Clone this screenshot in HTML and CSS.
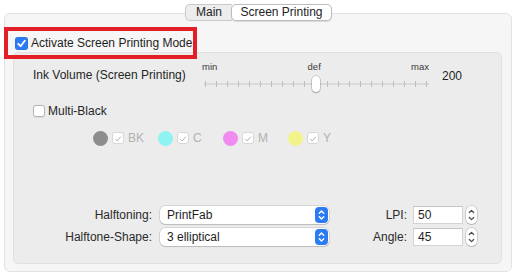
FILE: index.html
```html
<!DOCTYPE html>
<html>
<head>
<meta charset="utf-8">
<link rel="stylesheet" href="styles.css">
</head>
<body>
<div class="tabbar">
  <div class="tab">Main</div>
  <div class="tab active">Screen Printing</div>
</div>
<div class="outer">
  <div class="highlight"></div>
  <div class="check-row main-check">
    <span class="cb checked"><svg viewBox="0 0 13 13" width="13" height="13"><path d="M3.2 6.8 L5.6 9.2 L9.8 3.8" fill="none" stroke="#fff" stroke-width="1.8" stroke-linecap="round" stroke-linejoin="round"/></svg></span>
    <span>Activate Screen Printing Mode</span>
  </div>
  <div class="inner">
    <div class="ink-row">
      <div class="ink-label">Ink Volume (Screen Printing)</div>
      <div class="slider">
        <div class="slider-labels"><span>min</span><span>def</span><span>max</span></div>
        <div class="track">
          <div class="line"></div>
          <div class="ticks">
            <i></i><i></i><i></i><i></i><i></i><i></i><i></i><i></i><i></i><i></i><i></i><i></i><i></i><i></i><i></i><i></i><i></i><i></i><i></i><i></i><i></i>
          </div>
          <div class="thumb"></div>
        </div>
      </div>
      <div class="value">200</div>
    </div>
    <div class="check-row multi">
      <span class="cb small"></span>
      <span>Multi-Black</span>
    </div>
    <div class="colors">
      <div class="ink"><span class="dot bk"></span><span class="cb dis"><svg viewBox="0 0 12 12" width="12" height="12"><path d="M3 6.2 L5 8.4 L9 3.6" fill="none" stroke="#b4b4b4" stroke-width="1.2" stroke-linecap="round" stroke-linejoin="round"/></svg></span><span class="ink-name">BK</span></div>
      <div class="ink"><span class="dot c"></span><span class="cb dis"><svg viewBox="0 0 12 12" width="12" height="12"><path d="M3 6.2 L5 8.4 L9 3.6" fill="none" stroke="#b4b4b4" stroke-width="1.2" stroke-linecap="round" stroke-linejoin="round"/></svg></span><span class="ink-name">C</span></div>
      <div class="ink"><span class="dot m"></span><span class="cb dis"><svg viewBox="0 0 12 12" width="12" height="12"><path d="M3 6.2 L5 8.4 L9 3.6" fill="none" stroke="#b4b4b4" stroke-width="1.2" stroke-linecap="round" stroke-linejoin="round"/></svg></span><span class="ink-name">M</span></div>
      <div class="ink"><span class="dot y"></span><span class="cb dis"><svg viewBox="0 0 12 12" width="12" height="12"><path d="M3 6.2 L5 8.4 L9 3.6" fill="none" stroke="#b4b4b4" stroke-width="1.2" stroke-linecap="round" stroke-linejoin="round"/></svg></span><span class="ink-name">Y</span></div>
    </div>
    <div class="settings">
      <div class="lbl">Halftoning:</div>
      <div class="popup"><span>PrintFab</span><span class="popbtn"><svg viewBox="0 0 13 16" width="13" height="16"><path d="M4.3 6.3 L6.5 4.1 L8.7 6.3 M4.3 9.7 L6.5 11.9 L8.7 9.7" fill="none" stroke="#fff" stroke-width="1.4" stroke-linecap="round" stroke-linejoin="round"/></svg></span></div>
      <div class="lbl lbl2">LPI:</div>
      <div class="field">50</div>
      <div class="stepper"><svg viewBox="0 0 11 18" width="11" height="18"><path d="M3.3 6.5 L5.5 4.3 L7.7 6.5 M3.3 11.5 L5.5 13.7 L7.7 11.5" fill="none" stroke="#4a4a4a" stroke-width="1.2" stroke-linecap="round" stroke-linejoin="round"/></svg></div>

      <div class="lbl">Halftone-Shape:</div>
      <div class="popup"><span>3 elliptical</span><span class="popbtn"><svg viewBox="0 0 13 16" width="13" height="16"><path d="M4.3 6.3 L6.5 4.1 L8.7 6.3 M4.3 9.7 L6.5 11.9 L8.7 9.7" fill="none" stroke="#fff" stroke-width="1.4" stroke-linecap="round" stroke-linejoin="round"/></svg></span></div>
      <div class="lbl lbl2">Angle:</div>
      <div class="field">45</div>
      <div class="stepper"><svg viewBox="0 0 11 18" width="11" height="18"><path d="M3.3 6.5 L5.5 4.3 L7.7 6.5 M3.3 11.5 L5.5 13.7 L7.7 11.5" fill="none" stroke="#4a4a4a" stroke-width="1.2" stroke-linecap="round" stroke-linejoin="round"/></svg></div>
    </div>
  </div>
</div>
</body>
</html>
```

FILE: styles.css
```css
* { box-sizing: border-box; }
html, body {
  margin: 0;
  padding: 0;
  background: #ffffff;
  font-family: "Liberation Sans", Arial, sans-serif;
  font-size: 12px;
  color: #262626;
}
.tabbar {
  position: relative;
  z-index: 2;
  display: flex;
  justify-content: center;
  margin: 4px 0 0 -1px;
  height: 17px;
}
.tab {
  height: 17px;
  line-height: 15px;
  padding: 0 10px;
  background: #ededed;
  border: 1px solid #c9c9c9;
  border-radius: 5px 0 0 5px;
  font-size: 12px;
  color: #222;
}
.tab:first-child { width: 47px; padding: 0; text-align: center; border-right: none; }
.tab.active {
  width: 101px;
  padding: 0;
  text-align: center;
  background: #ffffff;
  border-radius: 5px;
  border-color: #bdbdbd;
  margin-left: -1px;
  box-shadow: 0 0.5px 1px rgba(0,0,0,0.12);
}
.outer {
  position: relative;
  margin: -8px 0 0 4px;
  width: 508px;
  height: 259px;
  background: #f6f6f6;
  border: 1px solid #e2e2e2;
  border-radius: 6px;
  padding: 21px 9px 7px 8px;
}
.highlight {
  position: absolute;
  left: -1px;
  top: 13px;
  width: 193px;
  height: 32px;
  border: 4px solid #e31e26;
  z-index: 3;
}
.check-row {
  display: flex;
  align-items: center;
}
.main-check {
  height: 16px;
  margin-bottom: 1px;
  padding-left: 2px;
  font-size: 12px;
  color: #1e1e1e;
}
.cb {
  display: inline-flex;
  flex: none;
  width: 13px;
  height: 13px;
  border-radius: 3px;
  background: #fff;
  border: 1px solid #b9b9b9;
  margin-right: 3px;
}
.cb svg { display: block; }
.cb.checked {
  background: #2b7cf3;
  border: none;
  box-shadow: inset 0 0 0 0.5px rgba(0,0,0,0.12);
}
.inner {
  display: flex;
  flex-direction: column;
  width: 489px;
  height: 212px;
  background: #ececec;
  border: 1px solid #e1e1e1;
  border-radius: 5px;
  padding: 8px 0 17px 0;
}
.ink-row {
  display: flex;
  align-items: center;
  height: 31px;
  padding-left: 19px;
}
.ink-label {
  width: 169px;
  margin-bottom: 3px;
  font-size: 12px;
}
.slider {
  width: 228px;
  height: 31px;
}
.slider-labels {
  display: flex;
  justify-content: space-between;
  height: 12px;
  line-height: 12px;
  font-size: 9.5px;
  color: #3a3a3a;
  padding-right: 1px;
}
.track {
  position: relative;
  height: 19px;
  margin-top: 0;
}
.line {
  position: absolute;
  left: 2px;
  right: 1px;
  top: 10px;
  height: 2px;
  background: #d9d9d9;
}
.ticks {
  position: absolute;
  left: 3px;
  top: 8px;
  width: 222px;
  height: 6px;
  display: flex;
  justify-content: space-between;
}
.ticks i {
  display: block;
  width: 1px;
  height: 6px;
  background: #bdbdbd;
}
.thumb {
  position: absolute;
  left: 110px;
  top: 3px;
  width: 8px;
  height: 16px;
  background: #fff;
  border-radius: 4px;
  box-shadow: 0 0 0 0.5px rgba(0,0,0,0.25), 0 1px 1.5px rgba(0,0,0,0.25);
}
.value {
  margin-left: 12px;
  margin-bottom: 1px;
  font-size: 12px;
  color: #1e1e1e;
}
.multi {
  margin-top: 12px;
  height: 14px;
  padding-left: 19px;
}
.cb.small {
  width: 12px;
  height: 12px;
  border-color: #b5b5b5;
  box-shadow: 0 0.5px 1px rgba(0,0,0,0.08);
}
.colors {
  display: flex;
  margin-top: 12px;
  height: 16px;
  padding-left: 79px;
}
.ink {
  display: flex;
  align-items: center;
  width: 65px;
}
.dot {
  width: 15px;
  height: 15px;
  border-radius: 50%;
  margin-right: 4px;
}
.dot.bk { background: #8d8d8d; }
.dot.c { background: #8ef3f3; }
.dot.m { background: #f08bef; }
.dot.y { background: #f3f38c; }
.cb.dis {
  width: 12px;
  height: 12px;
  border-color: #d6d6d6;
  margin-right: 4px;
}
.ink-name {
  color: #b1b1b1;
  font-size: 12px;
}
.settings {
  margin-top: auto;
  display: grid;
  grid-template-columns: 146px 169px 84px 53px 13px;
  grid-auto-rows: 18px;
  row-gap: 4px;
  align-items: center;
}
.lbl {
  text-align: right;
  padding-right: 8px;
  font-size: 12px;
  color: #2a2a2a;
}
.lbl.lbl2 { padding-right: 6px; }
.popup {
  display: flex;
  align-items: center;
  justify-content: space-between;
  height: 18px;
  background: #fff;
  border-radius: 5px;
  padding: 0 1px 0 7px;
  box-shadow: 0 0 0 0.5px rgba(0,0,0,0.2), 0 1px 1px rgba(0,0,0,0.12);
  font-size: 12px;
  color: #1e1e1e;
}
.popbtn {
  display: block;
  width: 13px;
  height: 16px;
  background: #2b7cf3;
  border-radius: 4px;
}
.popbtn svg { display: block; }
.field {
  width: 50px;
  height: 18px;
  line-height: 16px;
  background: #fff;
  border: 1px solid #d4d4d4;
  border-top-color: #c4c4c4;
  padding-left: 4px;
  font-size: 12px;
  color: #1e1e1e;
}
.stepper {
  width: 11px;
  height: 18px;
  background: #fff;
  border-radius: 5px;
  box-shadow: 0 0 0 0.5px rgba(0,0,0,0.25), 0 1px 1px rgba(0,0,0,0.1);
}
.stepper svg { display: block; }
```
